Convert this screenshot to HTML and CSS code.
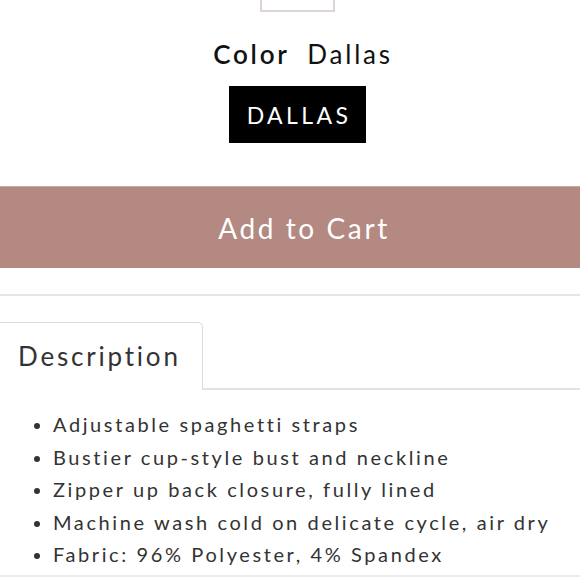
FILE: index.html
```html
<!DOCTYPE html>
<html>
<head>
<meta charset="utf-8">
<link rel="stylesheet" href="styles.css">
</head>
<body>
<div class="page">
  <div class="swatch-top"></div>
  <div class="color-row"><span class="color-label">Color</span> <span class="color-value">Dallas</span></div>
  <div class="option-row"><div class="option">DALLAS</div></div>
  <button class="add-cart">Add to Cart</button>
  <div class="divider"></div>
  <div class="tabs">
    <div class="tab">Description</div>
    <div class="tab-fill"></div>
  </div>
  <ul class="desc">
    <li>Adjustable spaghetti straps</li>
    <li>Bustier cup-style bust and neckline</li>
    <li>Zipper up back closure, fully lined</li>
    <li>Machine wash cold on delicate cycle, air dry</li>
    <li>Fabric: 96% Polyester, 4% Spandex</li>
  </ul>
</div>
</body>
</html>
```
FILE: styles.css
```css
* { box-sizing: border-box; }
html, body { margin: 0; padding: 0; background: #fff; }
body { font-family: "Lato", "Open Sans", sans-serif; color: #222; overflow: hidden; }
.page { width: 580px; }
.swatch-top {
  width: 75px; height: 12px; margin-left: 260px;
  border: 2px solid #ddd5d3; border-top: none;
}
.color-row {
  margin-top: 26px; text-align: center; font-size: 26px; letter-spacing: 2.8px;
  line-height: 32px; color: #111; padding-left: 26px;
}
.color-label { font-weight: 600; margin-right: 8px; }
.option-row { display: flex; justify-content: center; margin-top: 16px; padding-left: 15px; }
.option {
  width: 137px; height: 57px; background: #000; color: #fff; padding-left: 3px;
  font-size: 23px; letter-spacing: 3.4px; display: flex; align-items: center; justify-content: center;
}
.add-cart {
  display: block; width: 100%; height: 82px; margin-top: 43px; border: none;
  border-top: 1px solid #c9a9a3;
  background: #b38982; color: #fff; font-family: inherit; font-size: 28px; letter-spacing: 2.6px;
  padding: 0 0 0 28px;
}
.divider { height: 2px; background: #e6e6e6; margin-top: 26px; }
.tabs { display: flex; margin-top: 26px; }
.tab {
  width: 203px; height: 68px; border: 1px solid #dcdcdc; border-left: none; border-bottom: none;
  border-top-right-radius: 5px; font-size: 26px; letter-spacing: 2.8px; color: #333;
  padding-left: 18px; display: flex; align-items: center; padding-bottom: 1px;
}
.tab-fill { flex: 1; border-bottom: 2px solid #e2e2e2; }
.desc {
  margin: 0; padding: 18px 0 0 53px; font-size: 20px; letter-spacing: 2.6px; line-height: 32.5px;
  color: #333; border-bottom: 2px solid #ececec; padding-bottom: 4px;
}
.desc li::marker { font-size: 18px; }
```
